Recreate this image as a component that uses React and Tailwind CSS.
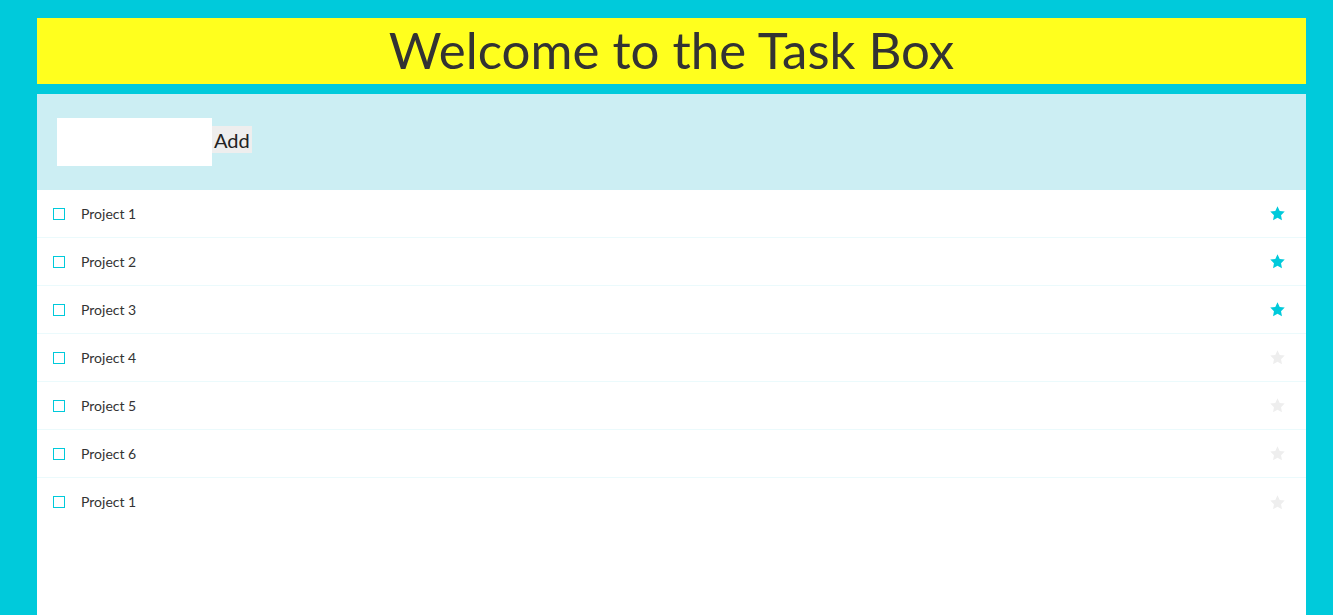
import React from "react";

const tasks = [
  { title: "Project 1", pinned: true },
  { title: "Project 2", pinned: true },
  { title: "Project 3", pinned: true },
  { title: "Project 4", pinned: false },
  { title: "Project 5", pinned: false },
  { title: "Project 6", pinned: false },
  { title: "Project 1", pinned: false },
];

const Star = ({ on }) => (
  <svg width="17" height="17" viewBox="0 0 24 24" className={on ? "fill-[#00cadb]" : "fill-[#eeeeee]"}>
    <path d="M12 1.8l3.1 6.6 7.1.9-5.2 5 1.3 7.1L12 18l-6.3 3.4 1.3-7.1-5.2-5 7.1-.9z" />
  </svg>
);

const TaskRow = ({ title, pinned }) => (
  <div className="flex items-center h-12 px-4 border-b border-[#ebfafc] last:border-b-0">
    <span className="w-3 h-3 border border-[#00cadb] bg-white shrink-0"></span>
    <span className="ml-4 text-[14px] text-[#333] flex-1 -mt-px">{title}</span>
    <span className="mr-1 flex items-center">
      <Star on={pinned} />
    </span>
  </div>
);

export default function App() {
  return (
    <div className="min-h-[615px] bg-[#00cadb] pl-[37px] pr-[27px] pt-[18px] flex flex-col font-['Lato','Noto_Sans',sans-serif]">
      {/* Header */}
      <div className="h-[66px] bg-[#ffff1e] flex items-center justify-center">
        <h1 className="text-[51px] text-[#333] font-normal leading-none pb-1">Welcome to the Task Box</h1>
      </div>

      <div className="mt-[10px] flex-1 flex flex-col bg-white">
        {/* Add form */}
        <div className="h-[96px] bg-[#cceef3] flex items-start pt-6 px-5">
          <input type="text" className="w-[155px] h-12 bg-white outline-none border-0" />
          <button className="mt-2 h-[27px] px-0.5 bg-[#eeeeee] text-[20px] text-[#222] leading-none">Add</button>
        </div>

        {/* List */}
        <div className="flex flex-col">
          {tasks.map((t, i) => (
            <TaskRow key={i} title={t.title} pinned={t.pinned} />
          ))}
        </div>
      </div>
    </div>
  );
}
